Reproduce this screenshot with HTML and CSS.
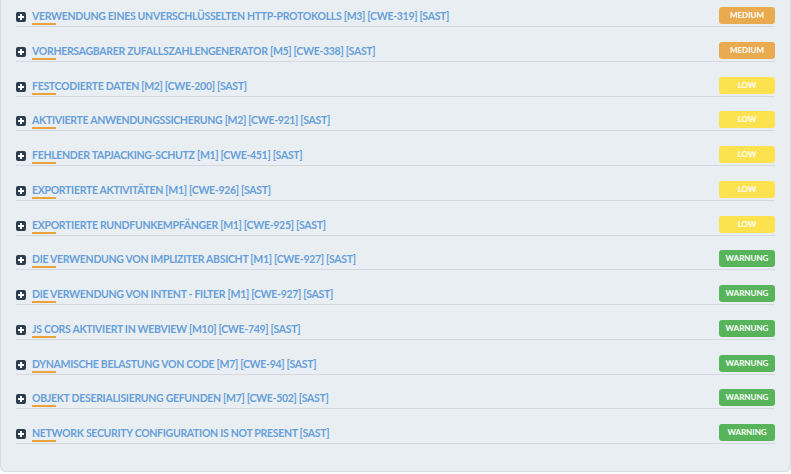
FILE: index.html
```html
<!DOCTYPE html>
<html lang="de">
<head>
<meta charset="utf-8">
<link rel="stylesheet" href="styles.css">
</head>
<body>
<div class="panel">
  <ul class="list">
    <li class="item"><span class="plus"></span><span class="title">Verwendung eines unverschlüsselten HTTP-Protokolls [M3] [CWE-319] [SAST]</span><span class="badge medium">MEDIUM</span></li>
    <li class="item"><span class="plus"></span><span class="title">Vorhersagbarer Zufallszahlengenerator [M5] [CWE-338] [SAST]</span><span class="badge medium">MEDIUM</span></li>
    <li class="item"><span class="plus"></span><span class="title">Festcodierte Daten [M2] [CWE-200] [SAST]</span><span class="badge low">LOW</span></li>
    <li class="item"><span class="plus"></span><span class="title">Aktivierte Anwendungssicherung [M2] [CWE-921] [SAST]</span><span class="badge low">LOW</span></li>
    <li class="item"><span class="plus"></span><span class="title">Fehlender Tapjacking-Schutz [M1] [CWE-451] [SAST]</span><span class="badge low">LOW</span></li>
    <li class="item"><span class="plus"></span><span class="title">Exportierte Aktivitäten [M1] [CWE-926] [SAST]</span><span class="badge low">LOW</span></li>
    <li class="item"><span class="plus"></span><span class="title">Exportierte Rundfunkempfänger [M1] [CWE-925] [SAST]</span><span class="badge low">LOW</span></li>
    <li class="item"><span class="plus"></span><span class="title">Die Verwendung von impliziter Absicht [M1] [CWE-927] [SAST]</span><span class="badge warn">WARNUNG</span></li>
    <li class="item"><span class="plus"></span><span class="title">Die Verwendung von Intent - Filter [M1] [CWE-927] [SAST]</span><span class="badge warn">WARNUNG</span></li>
    <li class="item"><span class="plus"></span><span class="title">JS CORS aktiviert in WebView [M10] [CWE-749] [SAST]</span><span class="badge warn">WARNUNG</span></li>
    <li class="item"><span class="plus"></span><span class="title">Dynamische Belastung von Code [M7] [CWE-94] [SAST]</span><span class="badge warn">WARNUNG</span></li>
    <li class="item"><span class="plus"></span><span class="title">Objekt Deserialisierung gefunden [M7] [CWE-502] [SAST]</span><span class="badge warn">WARNUNG</span></li>
    <li class="item"><span class="plus"></span><span class="title">Network Security Configuration is not present [SAST]</span><span class="badge warn">WARNING</span></li>
  </ul>
</div>
</body>
</html>
```
FILE: styles.css
```css
html, body {
  margin: 0;
  padding: 0;
  background: #ffffff;
}
body {
  font-family: Lato, "Open Sans", sans-serif;
}
.panel {
  width: 791px;
  height: 472px;
  box-sizing: border-box;
  background: #e9eef2;
  border: 1px solid #d7dde2;
  border-top: none;
  border-radius: 0 0 7px 7px;
  box-shadow: 0 1px 2px rgba(0,0,0,0.12);
  padding: 0 15px 0 15px;
}
.list {
  list-style: none;
  margin: 0;
  padding: 0;
  display: flex;
  flex-direction: column;
  gap: 7.75px;
}
.item {
  position: relative;
  display: flex;
  align-items: flex-start;
  height: 18px;
  padding-top: 8px;
  border-bottom: 1px solid #d3d9de;
}
.plus {
  position: relative;
  width: 10px;
  height: 10px;
  border-radius: 2px;
  background: #2c3d4e;
  margin-right: 6px;
  flex: none;
  margin-top: 4px;
}
.plus::before, .plus::after {
  content: "";
  position: absolute;
  background: #fff;
}
.plus::before {
  left: 2px;
  top: 4px;
  width: 6px;
  height: 2px;
}
.plus::after {
  left: 4px;
  top: 2px;
  width: 2px;
  height: 6px;
}
.title {
  flex: 1;
  font-size: 10.5px;
  font-weight: bold;
  text-transform: uppercase;
  color: #669fd9;
  letter-spacing: -0.3px;
  line-height: 17px;
}
.item::after {
  content: "";
  position: absolute;
  left: 16px;
  bottom: 1px;
  width: 24px;
  height: 2px;
  background: #eaa33f;
}
.badge {
  flex: none;
  width: 56px;
  height: 17px;
  margin-top: -1px;
  border-radius: 3px;
  color: #ffffff;
  font-size: 8px;
  font-weight: bold;
  line-height: 17px;
  text-align: center;
}
.medium { background: #eaaa4f; }
.low { background: #fde24f; }
.warn { background: #57b45a; }
```
